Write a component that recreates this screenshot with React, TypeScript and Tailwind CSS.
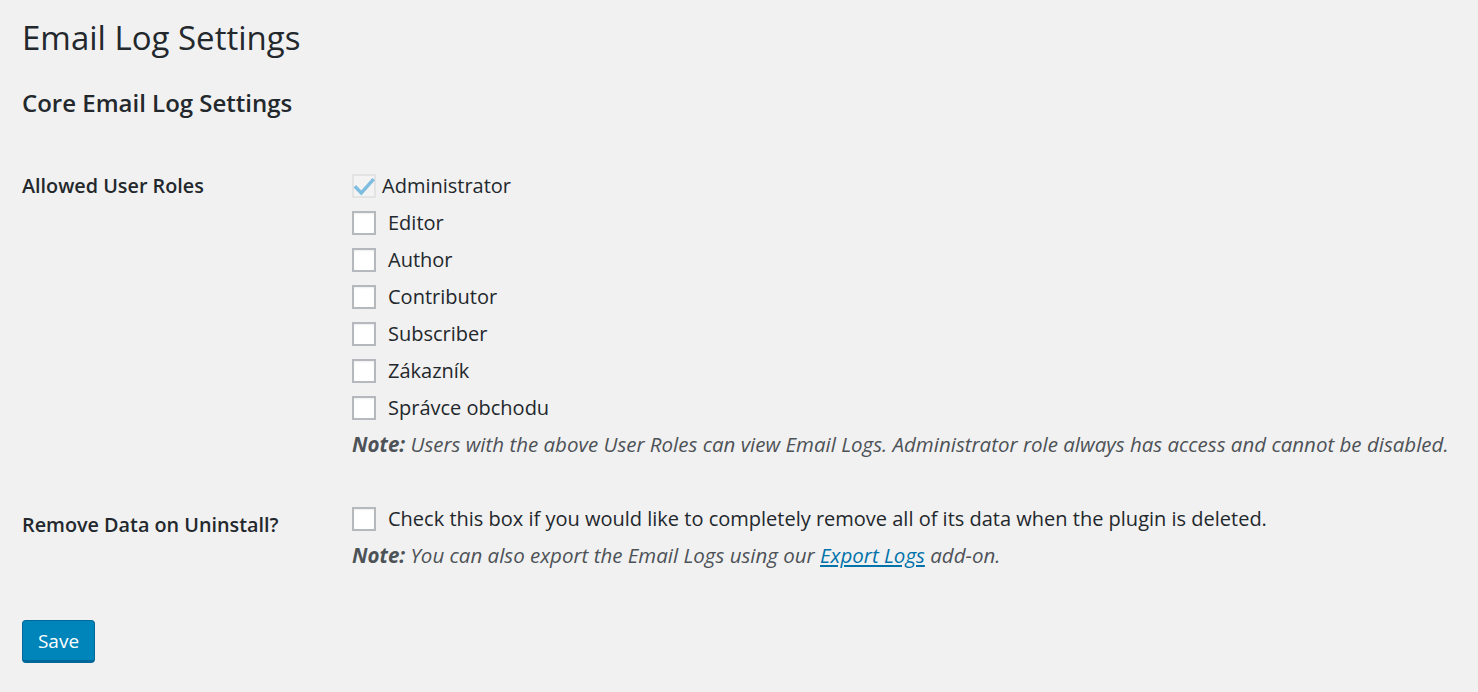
import React from "react";

const roles = ["Editor", "Author", "Contributor", "Subscriber", "Zákazník", "Správce obchodu"];

function Box() {
  return (
    <span className="inline-block w-[24px] h-[24px] bg-white border-2 border-[#b5b9bd] shadow-[inset_0_1px_2px_rgba(0,0,0,0.07)] shrink-0" />
  );
}

export default function App() {
  return (
    <div
      className="min-h-[692px] bg-[#f1f1f1] text-[#23282d] pl-[22px] pt-[18px]"
      style={{ fontFamily: '"Open Sans", "Noto Sans", sans-serif' }}
    >
      <h1 className="text-[33px] leading-[40px] font-normal">Email Log Settings</h1>
      <h2 className="mt-[30px] text-[24px] leading-[30px] font-semibold">Core Email Log Settings</h2>

      <div className="mt-[49px] flex">
        <div className="w-[330px] text-[19.8px] font-semibold leading-[37px]">Allowed User Roles</div>
        <div className="flex flex-col text-[20px]">
          <label className="flex items-center h-[37px] gap-[6px]">
            <span className="relative inline-block w-[24px] h-[24px] bg-[#f3f3f3] border-2 border-[#e3e3e3] shrink-0">
              <svg viewBox="0 0 24 24" className="absolute left-[-2px] top-[-2px] w-[24px] h-[24px]">
                <path d="M4 13.5 L9.3 19 L20.5 6.5" fill="none" stroke="#7fbde0" strokeWidth="3.4" strokeLinecap="square" strokeLinejoin="miter" />
              </svg>
            </span>
            <span>Administrator</span>
          </label>
          {roles.map((r) => (
            <label key={r} className="flex items-center h-[37px] gap-[12px]">
              <Box />
              <span>{r}</span>
            </label>
          ))}
          <p className="h-[37px] leading-[37px] italic text-[#4d5257] text-[20.5px] whitespace-nowrap">
            <b className="font-bold">Note:</b> Users with the above User Roles can view Email Logs. Administrator role always has access and cannot be disabled.
          </p>
        </div>
      </div>

      <div className="mt-[37px] flex">
        <div className="w-[330px] text-[19.8px] font-semibold leading-[37px] pt-[6px]">Remove Data on Uninstall?</div>
        <div className="flex flex-col text-[20px]">
          <label className="flex items-center h-[37px] gap-[12px]">
            <Box />
            <span>Check this box if you would like to completely remove all of its data when the plugin is deleted.</span>
          </label>
          <p className="h-[37px] leading-[37px] italic text-[#4d5257] text-[20.5px] whitespace-nowrap">
            <b className="font-bold">Note:</b> You can also export the Email Logs using our{" "}
            <a href="#" className="text-[#0073aa] underline">Export Logs</a> add-on.
          </p>
        </div>
      </div>

      <button className="mt-[46px] h-[43px] w-[73px] pt-[2px] rounded-[4px] bg-[#0085ba] border border-[#006799] border-b-[3px] text-white text-[19px]">
        Save
      </button>
    </div>
  );
}
